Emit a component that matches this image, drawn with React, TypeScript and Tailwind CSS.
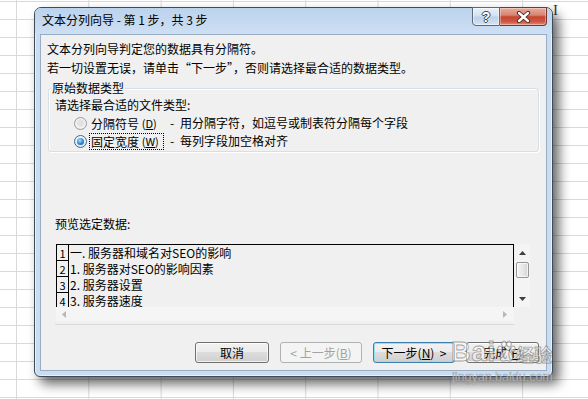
import React from "react";

type Dir = "up" | "down" | "left" | "right";

function Tri({ dir, color }: { dir: Dir; color: string }) {
  if (dir === "up")
    return (
      <svg width="7" height="4" viewBox="0 0 7 4">
        <polygon points="0,4 3.5,0 7,4" fill={color} />
      </svg>
    );
  if (dir === "down")
    return (
      <svg width="7" height="4" viewBox="0 0 7 4">
        <polygon points="0,0 7,0 3.5,4" fill={color} />
      </svg>
    );
  if (dir === "left")
    return (
      <svg width="4" height="7" viewBox="0 0 4 7">
        <polygon points="4,0 4,7 0,3.5" fill={color} />
      </svg>
    );
  return (
    <svg width="4" height="7" viewBox="0 0 4 7">
      <polygon points="0,0 0,7 4,3.5" fill={color} />
    </svg>
  );
}

const rows = [
  { n: "1", t: "一. 服务器和域名对SEO的影响" },
  { n: "2", t: "1. 服务器对SEO的影响因素" },
  { n: "3", t: "2. 服务器设置" },
  { n: "4", t: "3. 服务器速度" },
];

export default function App() {
  return (
    <div className="relative h-[399px] w-[588px] overflow-hidden bg-white bg-[linear-gradient(to_right,#d9d9d9_1px,transparent_1px),linear-gradient(to_bottom,#d9d9d9_1px,transparent_1px)] bg-[length:72.3px_18px] bg-size-[72.3px_18px] bg-[position:16px_1px] bg-position-[16px_1px] pl-[34px] pt-[7px] font-['Noto_Sans_CJK_SC','Liberation_Sans',sans-serif] text-[12px] leading-[16px] text-black">
      <span className="absolute left-[553px] top-[3px] font-['Liberation_Serif',serif] text-[15px] leading-[15px] text-[#333]">
        I
      </span>

      {/* dialog window */}
      <div className="flex h-[370px] w-[519px] flex-col rounded-t-[7px] rounded-b-[6px] border border-[#3e4c5a] bg-[#c9dcf1] shadow-[inset_0_0_0_1px_rgba(255,255,255,0.55),6px_7px_12px_rgba(0,0,0,0.6)]">
        {/* title bar */}
        <div className="flex h-[26px] shrink-0 rounded-t-[6px] bg-[linear-gradient(to_bottom,#bcd3ed,#c6daf0_60%,#cddff3)]">
          <div className="pl-[7px] pt-[4px] leading-[16px]">文本分列向导 - 第 1 步，共 3 步</div>
          <div className="-mt-[1px] ml-auto mr-[5px] flex h-[19px]">
            <div className="flex w-[28px] items-center justify-center rounded-bl-[4px] border border-[#5b6b7d] bg-[linear-gradient(to_bottom,#e9f0f9,#d3e0ef_48%,#bcd0e7_52%,#d4e3f3)] shadow-[inset_0_0_0_1px_rgba(255,255,255,0.5)]">
              <span className="font-['Liberation_Sans',sans-serif] text-[14px] font-bold leading-[14px] text-white [text-shadow:1px_0_#36475a,-1px_0_#36475a,0_1px_#36475a,0_-1px_#36475a]">
                ?
              </span>
            </div>
            <div className="flex w-[47px] items-center justify-center rounded-br-[4px] border border-l-0 border-[#6e3a32] bg-[linear-gradient(to_bottom,#e9ab9c,#d88472_42%,#c5462f_52%,#cf5644_80%,#e38b73)] shadow-[inset_0_0_0_1px_rgba(255,255,255,0.35)]">
              <svg width="15" height="12" viewBox="0 0 15 12">
                <path d="M3 2 L12 10 M12 2 L3 10" stroke="#4a2320" strokeWidth="4.2" strokeLinecap="round" />
                <path d="M3 2 L12 10 M12 2 L3 10" stroke="#ffffff" strokeWidth="2.4" strokeLinecap="round" />
              </svg>
            </div>
          </div>
        </div>

        {/* client area */}
        <div className="mx-[5px] mb-[5px] flex flex-1 flex-col border border-[#98acc4] bg-[#f0f0f0]">
          <div className="ml-[6px] mt-[6px] whitespace-nowrap">文本分列向导判定您的数据具有分隔符。</div>
          <div className="ml-[6px] mt-[3px] whitespace-nowrap">
            若一切设置无误，请单击“下一步”，否则请选择最合适的数据类型。
          </div>

          {/* group box */}
          <div className="relative ml-[7px] mt-[12px] h-[64px] w-[491px] rounded-[3px] border border-[#d5dfe5] pt-[8px] shadow-[inset_1px_1px_0_#ffffff,1px_1px_0_#ffffff]">
            <span className="absolute -top-[9px] left-[2px] bg-[#f0f0f0] px-[1px]">原始数据类型</span>
            <div className="pl-[6px]">请选择最合适的文件类型:</div>
            <div className="mt-[1px] flex h-[18px] items-center pl-[25px]">
              <div className="h-[13px] w-[13px] shrink-0 rounded-full border border-[#9a9a9a] bg-[radial-gradient(circle_at_50%_45%,#e2e2e2_35%,#f4f4f4_60%,#dcdcdc)]" />
              <div className="ml-[2px] flex h-[17px] w-[75px] shrink-0 items-center whitespace-nowrap border border-transparent px-[1px] leading-[15px]">
                分隔符号&nbsp;<span className="text-[11px]">(<u>D</u>)</span>
              </div>
              <span className="ml-[6px] w-[10px]">-</span>
              <span className="whitespace-nowrap">用分隔字符，如逗号或制表符分隔每个字段</span>
            </div>
            <div className="flex h-[18px] items-center pl-[25px]">
              <div className="flex h-[13px] w-[13px] shrink-0 items-center justify-center rounded-full border border-[#3d6a8f] bg-[linear-gradient(to_bottom,#f6f6f6,#dfe6ec)]">
                <div className="h-[7px] w-[7px] rounded-full bg-[radial-gradient(circle_at_40%_35%,#a8e0ff,#2b86d2_55%,#0f4e8c)]" />
              </div>
              <div className="ml-[2px] flex h-[17px] w-[75px] shrink-0 items-center whitespace-nowrap border border-dotted border-black px-[1px] leading-[15px]">
                固定宽度&nbsp;<span className="text-[11px]">(<u>W</u>)</span>
              </div>
              <span className="ml-[6px] w-[10px]">-</span>
              <span className="whitespace-nowrap">每列字段加空格对齐</span>
            </div>
          </div>

          <div className="ml-[14px] mt-[64px]">预览选定数据:</div>

          {/* preview */}
          <div className="ml-[15px] mt-[12px] flex">
            <div className="flex w-[458px] flex-col">
              <div className="h-[63px] overflow-hidden border-x border-t border-black">
                {rows.map((r) => (
                  <div key={r.n} className="flex h-[16px]">
                    <div className="flex w-[12px] shrink-0 items-end justify-center border-b border-r border-black text-[11px] leading-[13px]">
                      {r.n}
                    </div>
                    <div className="whitespace-nowrap pl-[1px] leading-[16px]">{r.t}</div>
                  </div>
                ))}
              </div>
              <div className="flex h-[14px] items-center justify-between bg-[#f5f5f5] pl-[6px] pr-[7px]">
                <Tri dir="left" color="#b8b8b8" />
                <Tri dir="right" color="#b8b8b8" />
              </div>
            </div>
            <div className="ml-[1px] flex h-[63px] w-[15px] flex-col items-center bg-[#f4f4f4]">
              <div className="mt-[7px] flex">
                <Tri dir="up" color="#3e3e3e" />
              </div>
              <div className="mt-[7px] h-[16px] w-[13px] rounded-[2px] border border-[#969696] bg-[linear-gradient(to_right,#f5f5f5,#e8e8e8_50%,#d5d5d5)] shadow-[inset_0_0_0_1px_rgba(255,255,255,0.7)]" />
              <div className="mb-[6px] mt-auto flex">
                <Tri dir="down" color="#3e3e3e" />
              </div>
            </div>
          </div>

          <div className="ml-[14px] mt-[3px] h-[1px] w-[459px] bg-[#d9d9d9]" />

          {/* buttons */}
          <div className="ml-[154px] mt-[17px] flex h-[21px] gap-[11px]">
            <div className="flex w-[74px] items-center justify-center rounded-[3px] border border-[#707070] bg-[linear-gradient(to_bottom,#f2f2f2,#ebebeb_45%,#dddddd_50%,#cfcfcf)] shadow-[inset_0_0_0_1px_rgba(255,255,255,0.7)]">
              取消
            </div>
            <div className="flex w-[82px] items-center justify-center rounded-[3px] border border-[#adb2b5] bg-[#f4f4f4] text-[#a3a3a3]">
              &lt;&nbsp;上一步(<u>B</u>)
            </div>
            <div className="flex w-[82px] items-center justify-center rounded-[3px] border border-[#3c7fb1] bg-[linear-gradient(to_bottom,#f2f2f2,#ebebeb_45%,#dddddd_50%,#cfcfcf)] shadow-[inset_0_0_0_1px_#98dcf6]">
              下一步(<u>N</u>)&nbsp;&nbsp;&gt;
            </div>
            <div className="flex w-[73px] items-center justify-center rounded-[3px] border border-[#707070] bg-[linear-gradient(to_bottom,#f2f2f2,#ebebeb_45%,#dddddd_50%,#cfcfcf)] shadow-[inset_0_0_0_1px_rgba(255,255,255,0.7)]">
              完成(<u>F</u>)
            </div>
          </div>
        </div>
      </div>

      {/* watermark */}
      <div className="pointer-events-none absolute left-[451px] top-[338px] flex items-end text-[rgba(255,255,255,0.55)] [-webkit-text-stroke:0.8px_rgba(110,110,110,0.65)]">
        <span className="font-['Liberation_Sans',sans-serif] text-[27px] font-bold leading-[28px] tracking-[1px]">Bai</span>
        <svg width="20" height="24" viewBox="0 0 20 24" className="mb-[2px]">
          <g fill="rgba(255,255,255,0.55)" stroke="rgba(110,110,110,0.65)" strokeWidth="1">
            <ellipse cx="4" cy="9" rx="2.3" ry="3" />
            <ellipse cx="8" cy="4" rx="2.3" ry="3" />
            <ellipse cx="13" cy="4" rx="2.3" ry="3" />
            <ellipse cx="17" cy="9" rx="2.3" ry="3" />
            <path d="M10.5 10 C6 10 4 16 4.5 19 C5 22 8 21 10.5 20.5 C13 21 16 22 16.5 19 C17 16 15 10 10.5 10 Z" />
          </g>
        </svg>
        <span className="mb-[2px] text-[18px] font-bold leading-[20px]">经验</span>
      </div>
      <div className="pointer-events-none absolute left-[452px] top-[369px] font-['Liberation_Sans',sans-serif] text-[12.5px] leading-[16px] text-[rgba(255,255,255,0.6)] [-webkit-text-stroke:0.6px_rgba(120,120,120,0.6)]">
        jingyan.baidu.com
      </div>
    </div>
  );
}
